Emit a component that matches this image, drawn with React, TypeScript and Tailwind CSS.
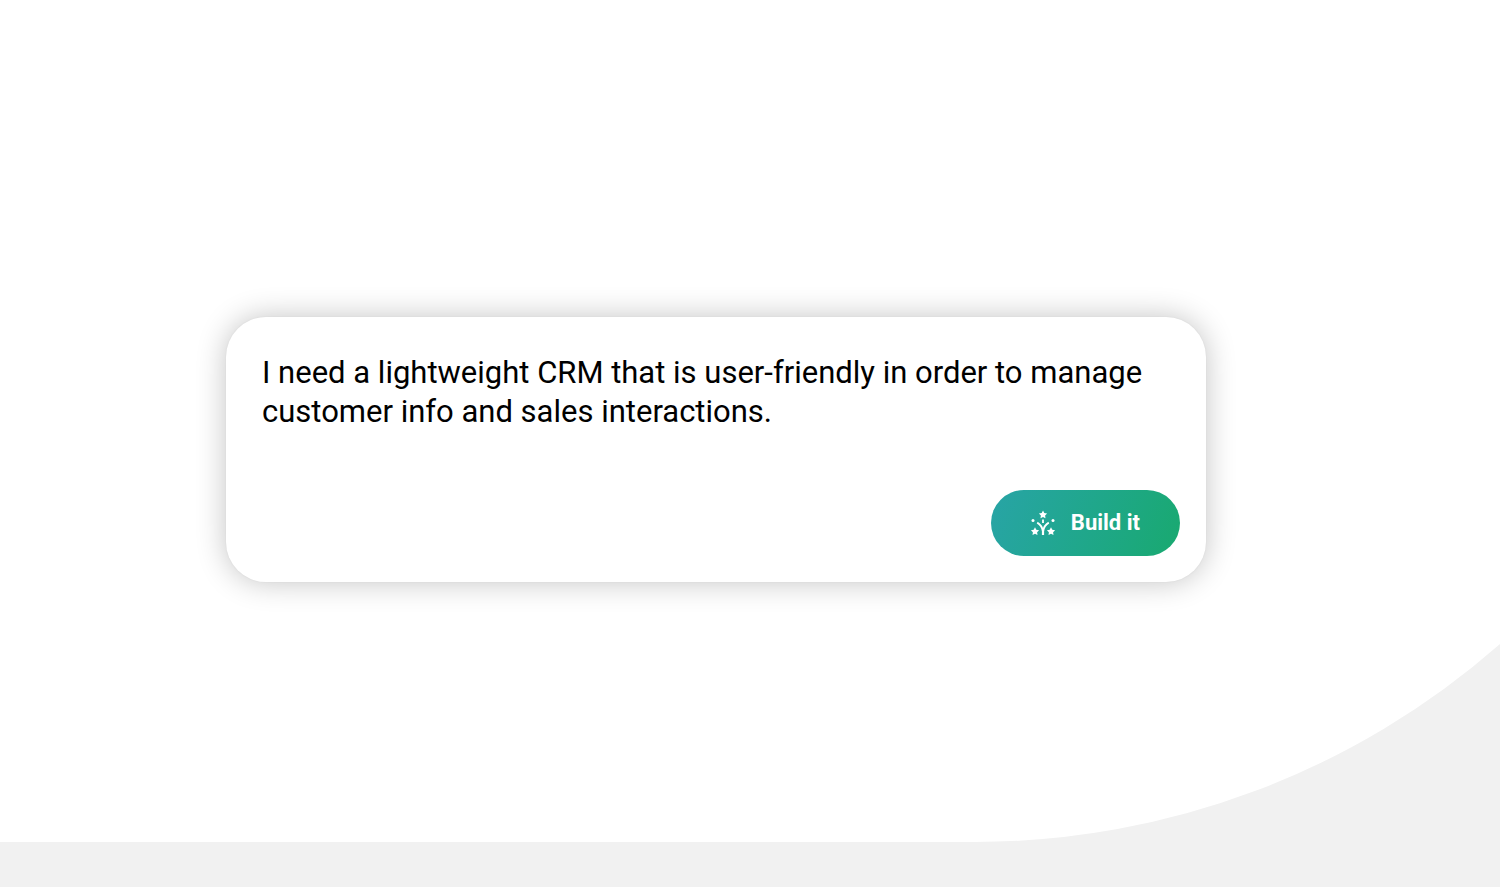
import React, { useState } from 'react';

const STAR = 'M0 -4.2L1.3 -1.6L4.1 -1.2L2.1 0.8L2.5 3.7L0 2.4L-2.5 3.7L-2.1 0.8L-4.1 -1.2L-1.3 -1.6Z';

const FireworkIcon: React.FC = () => (
  <svg viewBox="0 0 24 24" fill="currentColor" className="size-6 shrink-0 overflow-visible" aria-hidden="true">
    <path d={STAR} transform="translate(12 3.6)" />
    <path d={STAR} transform="translate(4 20.4)" />
    <path d={STAR} transform="translate(20 20.4)" />
    <circle cx="2" cy="9.4" r="1.5" />
    <circle cx="22" cy="9.4" r="1.5" />
    <g fill="none" stroke="currentColor" strokeWidth="1.8">
      <path d="M12 8.6V12" />
      <path d="M6.2 11.6C8.6 13 11.2 15.6 11.8 20" />
      <path d="M17.8 11.6C15.4 13 12.8 15.6 12.2 20" />
    </g>
    <path d="M10.9 24V18H13.1V24Z" />
  </svg>
);

const PromptCard: React.FC = () => {
  const [prompt, setPrompt] = useState(
    'I need a lightweight CRM that is user-friendly in order to manage customer info and sales interactions.'
  );

  return (
    <form
      onSubmit={(e) => e.preventDefault()}
      className="flex w-full max-w-[980px] flex-col rounded-[40px] bg-white shadow-[0_0_30px_rgba(0,0,0,0.24),0_0_2px_rgba(0,0,0,0.06)]"
    >
      <textarea
        aria-label="Describe your app"
        rows={3}
        value={prompt}
        onChange={(e) => setPrompt(e.target.value)}
        className="mb-5 block w-full resize-none overflow-hidden bg-transparent px-9 pt-9 text-[31px] leading-[39px] text-black outline-none"
      />
      <div className="flex justify-end px-[26px] pb-[26px]">
        <button
          type="submit"
          className="flex h-[66px] cursor-pointer items-center gap-4 rounded-full bg-linear-110 from-[#28a4a6] to-[#19a96f] px-10 text-[22px] font-bold text-white"
        >
          <FireworkIcon />
          Build it
        </button>
      </div>
    </form>
  );
};

export default function App() {
  return (
    <div className="flex min-h-screen flex-col overflow-hidden bg-white font-[Roboto,sans-serif]">
      <main className="relative flex flex-1 items-center justify-center pt-14 pr-17">
        {/* Curve that rises out of the footer band */}
        <svg
          viewBox="0 0 525 198"
          preserveAspectRatio="none"
          className="absolute right-0 bottom-0 w-[35%]"
          aria-hidden="true"
        >
          <path d="M0 198A795 795 0 0 0 525 0V198Z" fill="#f1f1f1" />
        </svg>
        <div className="relative flex w-full justify-center">
          <PromptCard />
        </div>
      </main>
      <footer className="h-[45px] bg-[#f1f1f1]" />
    </div>
  );
}
